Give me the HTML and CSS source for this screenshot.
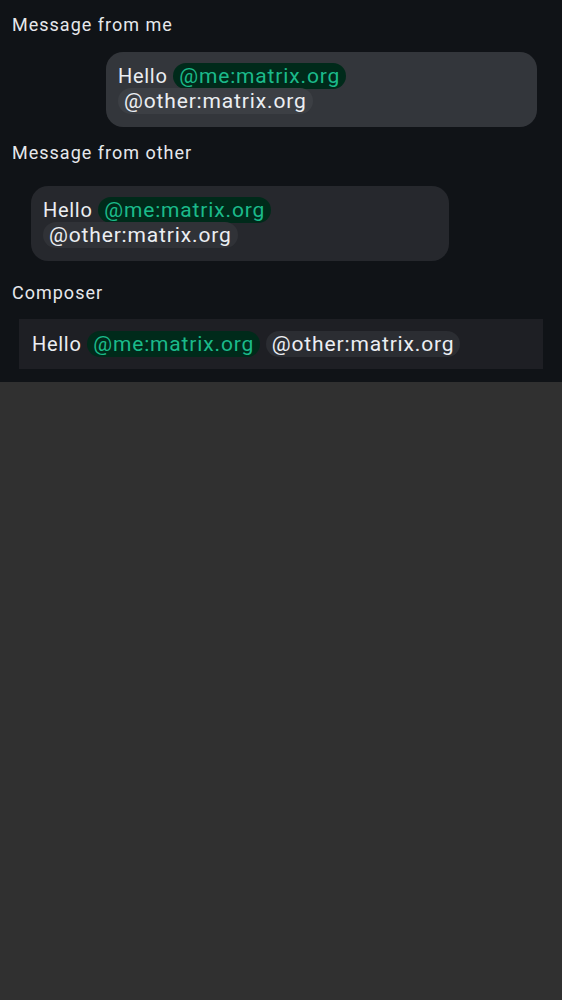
FILE: index.html
```html
<!DOCTYPE html>
<html>
<head>
<meta charset="utf-8">
<link rel="stylesheet" href="styles.css">
</head>
<body>
<div class="screen">
  <div class="label first">Message from me</div>
  <div class="row end">
    <div class="bubble mine">Hello <span class="pill me">@me:matrix.org</span> <span class="pill other">@other:matrix.org</span></div>
  </div>
  <div class="label second">Message from other</div>
  <div class="row start">
    <div class="bubble theirs">Hello <span class="pill me">@me:matrix.org</span> <span class="pill other">@other:matrix.org</span></div>
  </div>
  <div class="label third">Composer</div>
  <div class="composer">Hello <span class="pill me">@me:matrix.org</span> <span class="pill other">@other:matrix.org</span></div>
</div>
</body>
</html>
```
FILE: styles.css
```css
html, body {
  margin: 0;
  padding: 0;
  background: #303030;
  font-family: Roboto, "Noto Sans", sans-serif;
}
.screen {
  background: #101317;
  height: 382px;
  padding: 0 12px;
  box-sizing: border-box;
  overflow: hidden;
}
.label {
  color: #e6e8ec;
  font-size: 18px;
  line-height: 24px;
  letter-spacing: 1px;
}
.label.first { padding-top: 13px; }
.label.second { margin-top: 14px; }
.label.third { margin-top: 20px; }
.row { display: flex; }
.row.end { justify-content: flex-end; margin-top: 15px; padding-right: 13px; }
.row.start { justify-content: flex-start; margin-top: 21px; padding-left: 19px; }
.bubble {
  box-sizing: border-box;
  border-radius: 17px;
  padding: 12px 12px 13px;
  color: #ebeef2;
  font-size: 20px;
  line-height: 25px;
  letter-spacing: 0.7px;
}
.bubble.mine { width: 431px; background: #33363b; }
.bubble.theirs { width: 418px; background: #26282d; }
.pill {
  font-size: 21px;
  padding: 0.8px 6px;
  border-radius: 13px;
  letter-spacing: 0.85px;
}
.pill.me { background: #002a1a; color: #1bba8a; }
.mine .pill.other { background: #3c3f44; }
.theirs .pill.other { background: #303237; }
.composer .pill.other { background: #2b2d32; }
.composer {
  margin: 14px 7px 0;
  background: #1e1f24;
  height: 50px;
  box-sizing: border-box;
  padding: 13px 13px 12px;
  white-space: nowrap;
  color: #ebeef2;
  font-size: 20px;
  line-height: 25px;
  letter-spacing: 0.7px;
}
```
